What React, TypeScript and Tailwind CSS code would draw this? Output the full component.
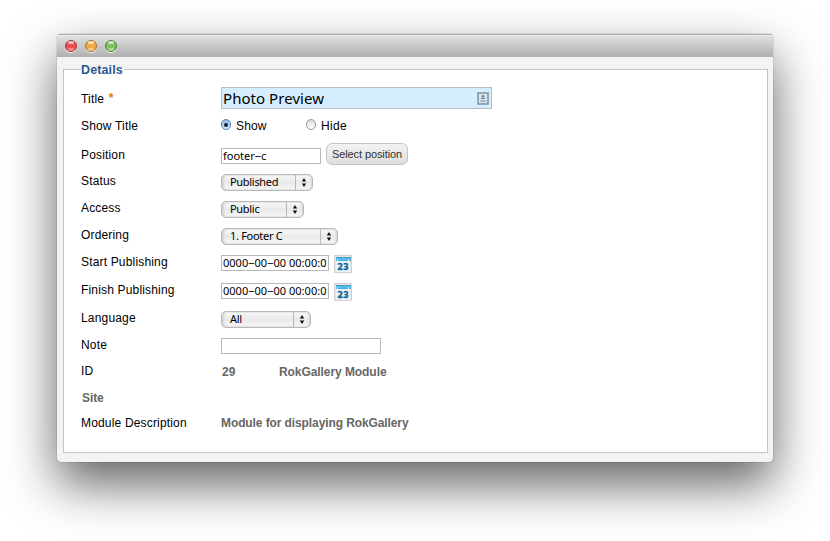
import React from "react";

const ARIAL = "font-['Liberation_Sans',Arial,sans-serif]";
const LUCIDA = "font-['Noto_Sans','Open_Sans',sans-serif]";

function Row({ h, label, children, labelClass = "tracking-[0.17px]" }: { h: string; label: React.ReactNode; children?: React.ReactNode; labelClass?: string }) {
  return (
    <div className={`flex ${h}`}>
      <div className={`flex w-[140px] shrink-0 items-center whitespace-nowrap ${labelClass}`}><span>{label}</span></div>
      <div className="flex items-center">{children}</div>
    </div>
  );
}

function Select({ w, text }: { w: string; text: string }) {
  return (
    <div className={`mt-[3px] flex h-[17px] ${w} rounded-[5px] border border-[#b8b8b8] bg-linear-to-b from-[#fafafa] via-[#e9e9e9] to-[#f8f8f8] shadow-[inset_2px_0_2px_#d4d4d4,inset_-1px_0_2px_#d4d4d4] ${LUCIDA} text-[11px] leading-[14px]`}>
      <span className="flex-1 whitespace-pre pl-2 tracking-[-0.3px]">{text}</span>
      <span className="flex w-[17px] items-center justify-center border-l border-[#b9b9b9]">
        <svg width="6" height="9" viewBox="0 0 6 9"><path d="M3 0L5.2 3.5H.8zM3 9L.8 5.5h4.4z" fill="#111" /></svg>
      </span>
    </div>
  );
}

function Calendar() {
  return (
    <svg className="ml-[5px] mt-[5px]" width="18" height="18" viewBox="0 0 18 18">
      <defs><linearGradient id="calendarTop" x2="0" y2="1"><stop stopColor="#3286b5" /><stop offset=".35" stopColor="#55c0eb" /><stop offset="1" stopColor="#45abdc" /></linearGradient></defs>
      <path d="M.5.5h17v17H.5z" fill="#e6e6e6" stroke="#d0d0d0" />
      <path d="M2 5h14v12H2z" fill="#f1f4f6" />
      <path d="M2 2h15v4H2z" fill="url(#calendarTop)" />
      <path d="M3 4h1v2H3zM14 4h1v2h-1z" fill="#d5effa" />
      <text x="9" y="15.4" textAnchor="middle" textLength="11.5" lengthAdjust="spacingAndGlyphs" fontFamily="DejaVu Sans" fontWeight="700" fontSize="9.5" fill="#16679c" stroke="#16679c" strokeWidth=".35">23</text>
    </svg>
  );
}

function DateField() {
  return (
    <>
      <div className={`mt-[3px] h-4 w-[108px] overflow-hidden border border-[#b8b8b8] pl-px ${LUCIDA} whitespace-nowrap text-[11px] leading-[14px] tracking-[0.02px]`}>0000‒00‒00 00:00:0</div>
      <Calendar />
    </>
  );
}

function Light({ color }: { color: string }) {
  return (
    <span className={`relative h-3 w-3 rounded-full border ${color} shadow-[0_1px_1px_#f5f5f5]`}>
      <span className="absolute left-[2px] top-0 h-[3px] w-[6px] rounded-full bg-white/60" />
      <span className="absolute bottom-0 left-[2px] h-[3px] w-[6px] rounded-full bg-white/35" />
    </span>
  );
}

export default function App() {
  return (
    <main className={`h-[541px] w-[830px] overflow-hidden bg-white pl-[57px] pt-[34px] ${ARIAL} text-[12px] text-black`}>
      <div className="h-[428px] w-[716px] overflow-hidden rounded-[4px] bg-[#f3f3f3] shadow-[0_22px_50px_rgba(0,0,0,0.62),0_0_1px_rgba(0,0,0,0.7)]">
        <div className="flex h-[23px] items-center gap-2 border-t border-[#a8a8a8] bg-linear-to-b from-[#e2e2e2] to-[#b0b0b0] pl-2 shadow-[inset_0_1px_#efefef]">
          <Light color="border-[#9b3438] bg-[#ed4e50]" />
          <Light color="border-[#a36b2c] bg-[#f0aa45]" />
          <Light color="border-[#4c7d3a] bg-[#7dc45f]" />
        </div>
        <div className="px-[6px] pt-[4px]">
          <fieldset className="h-[392px] w-[705px]">
            <div className="flex h-[16px] items-center">
              <span className="h-px w-[18px] bg-[#c5c5c5]" />
              <span className="w-[43px] whitespace-nowrap pt-px text-[12.5px] font-bold leading-4 tracking-[0.12px] text-[#2c5a94]">Details</span>
              <span className="h-px flex-1 bg-[#c5c5c5]" />
            </div>
            <div className="-mt-2 h-[384px] border border-t-0 border-[#c5c5c5] bg-[linear-gradient(#fff,#fff)] pl-[17px] pt-[16px]">
              <Row h="h-[27px]" label={<>Title <span className="relative -top-px left-px text-[13px] font-bold leading-3 text-[#dd7828]">*</span></>}>
                <div className={`-mt-px flex h-[22px] w-[271px] items-center justify-between border border-[#b4bec5] bg-[#d4edff] pl-px pr-[2px] ${LUCIDA} text-[15px] tracking-[0.05px]`}>
                  <span>Photo Preview</span>
                  <svg width="12" height="13" viewBox="0 0 12 13"><path d="M1 1h10v11H1z" fill="#d7e5ee" stroke="#82929c" strokeWidth="1.5" /><circle cx="6" cy="4.2" r="1.3" fill="#788994" /><path d="M3.5 7q2.5-2.8 5 0zM3.5 8.5h5v1h-5z" fill="#788994" /></svg>
                </div>
              </Row>
              <Row h="h-[28px]" label="Show Title">
                <div className="flex">
                  <span className="-mt-px mr-[5px] flex h-[11px] w-[10px] items-center justify-center rounded-full border border-[#5b7ea9] bg-linear-to-b from-[#91b8e4] to-[#d5efff]"><span className="h-1 w-1 rounded-full bg-[#111e38]" /></span>
                  <span className="w-[70px] leading-3 tracking-[0.15px]">Show</span>
                  <span className="-mt-px mr-[5px] h-[11px] w-[10px] rounded-full border border-[#999] bg-linear-to-b from-[#ddd] to-white" />
                  <span className="leading-3 tracking-[0.3px]">Hide</span>
                </div>
              </Row>
              <Row h="h-[29px]" label="Position">
                <div className={`mt-[3px] h-4 w-[100px] border border-[#b8b8b8] pl-px ${LUCIDA} text-[11px] leading-[14px]`}>footer‒c</div>
                <div className="-mt-px ml-[5px] flex h-[22px] w-[82px] items-center justify-center whitespace-nowrap rounded-[6px] border border-[#c4c4c4] bg-linear-to-b from-[#f2f2f2] to-[#dedede] text-[11px] tracking-[-0.1px] text-[#333]">Select position</div>
              </Row>
              <Row h="h-[25px] pb-px" label="Status"><Select w="w-[92px]" text="Published" /></Row>
              <Row h="h-[28px]" label="Access"><Select w="w-[83px]" text="Public" /></Row>
              <Row h="h-[27px] pb-px" label="Ordering"><Select w="w-[117px]" text="1. Footer C" /></Row>
              <Row h="h-[27px] pb-[2px]" label="Start Publishing"><DateField /></Row>
              <Row h="h-[28px] pb-px" label="Finish Publishing"><DateField /></Row>
              <Row h="h-[28px]" label="Language"><Select w="w-[90px]" text="All" /></Row>
              <Row h="h-[26px]" label="Note"><div className="mt-[2px] h-4 w-[160px] border border-[#b8b8b8]" /></Row>
              <Row h="h-[27px] pb-px" label="ID">
                <span className="mt-[2px] w-[58px] pl-px font-bold text-[#666]">29</span>
                <span className="mt-[2px] font-bold tracking-[-0.07px] text-[#666]">RokGallery Module</span>
              </Row>
              <Row h="h-[26px]" label="Site" labelClass="pl-px font-bold text-[#666] tracking-[-0.07px]" />
              <Row h="h-[25px] pb-[2px]" label="Module Description"><span className="font-bold tracking-[-0.1px] text-[#666]">Module for displaying RokGallery</span></Row>
            </div>
          </fieldset>
        </div>
      </div>
    </main>
  );
}
